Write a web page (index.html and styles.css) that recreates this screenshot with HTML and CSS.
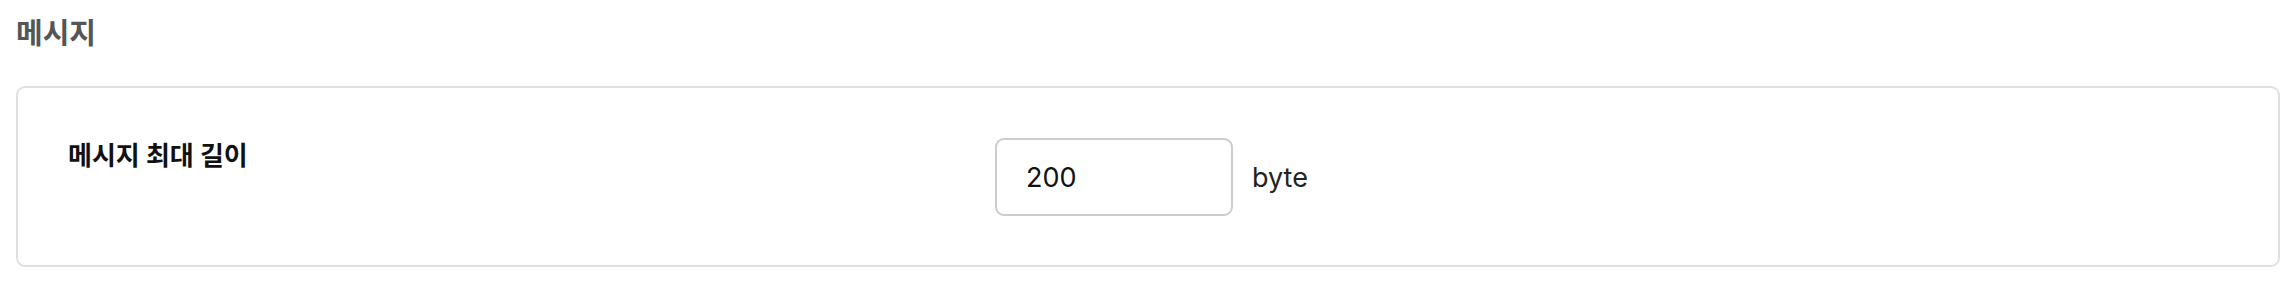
FILE: index.html
```html
<!DOCTYPE html>
<html lang="ko">
<head>
<meta charset="utf-8">
<link rel="stylesheet" href="styles.css">
</head>
<body>
<section class="section">
  <h2 class="section-title">메시지</h2>
  <div class="card">
    <div class="row">
      <div class="row-label">메시지 최대 길이</div>
      <div class="row-control">
        <div class="input-box">200</div>
        <span class="unit">byte</span>
      </div>
    </div>
  </div>
</section>
</body>
</html>
```

FILE: styles.css
```css
html, body {
  margin: 0;
  padding: 0;
  background: #ffffff;
}
body {
  font-family: Inter, "Noto Sans CJK KR", sans-serif;
  color: #111111;
}
.section {
  padding: 12px 16px 0 16px;
}
.section-title {
  margin: 0;
  font-size: 29px;
  line-height: 44px;
  font-weight: 700;
  color: #555555;
}
.card {
  margin-top: 30px;
  border: 2px solid #e0e0e0;
  border-radius: 9px;
  padding: 50px 48px 49px 50px;
}
.row {
  display: flex;
  align-items: flex-start;
}
.row-label {
  width: 927px;
  font-size: 26px;
  line-height: 36px;
  font-weight: 700;
  color: #111111;
}
.row-control {
  display: flex;
  align-items: center;
  gap: 19px;
}
.input-box {
  box-sizing: border-box;
  width: 238px;
  height: 78px;
  border: 2px solid #cccccc;
  border-radius: 9px;
  padding-left: 29px;
  display: flex;
  align-items: center;
  font-size: 27px;
  color: #111111;
}
.unit {
  font-size: 27px;
  color: #222222;
}
```
